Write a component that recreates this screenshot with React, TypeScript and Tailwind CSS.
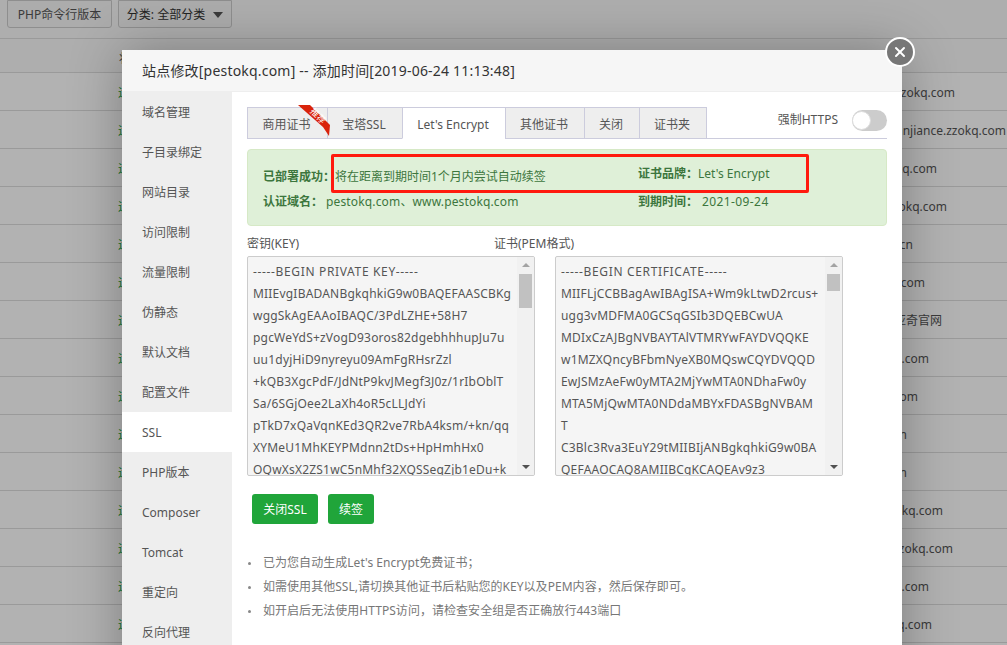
import { X } from "lucide-react";

const sansFont = "font-['Noto_Sans','Noto_Sans_CJK_SC',sans-serif]";

const pageRows = [
  { site: "www.zzokq.com", end: 955 },
  { site: "jianjiance.zzokq.com", end: 1006 },
  { site: "www.zzokq.com", end: 937 },
  { site: "www.zzokq.com", end: 947 },
  { site: "www.zzokq.cn", end: 913 },
  { site: "www.zzokq.com", end: 925 },
  { site: "亚奇官网", end: 942 },
  { site: "www.zzokq.com", end: 929 },
  { site: "www.zzokq.com", end: 918 },
  { site: "www.zzokq.cn", end: 907 },
  { site: "www.zzokq.cn", end: 907 },
  { site: "www.zzokq.com", end: 943 },
  { site: "www.zzokq.com", end: 953 },
  { site: "www.zzokq.com", end: 929 },
  { site: "www.zzokq.com", end: 932 },
];

const menuItems = ["域名管理", "子目录绑定", "网站目录", "访问限制", "流量限制", "伪静态", "默认文档", "配置文件", "SSL", "PHP版本", "Composer", "Tomcat", "重定向", "反向代理"];

const tabs = [
  { label: "商用证书", width: "w-[81px]" },
  { label: "宝塔SSL", width: "w-[76px]" },
  { label: "Let's Encrypt", width: "w-[104px]", active: true },
  { label: "其他证书", width: "w-[80px]" },
  { label: "关闭", width: "w-[56px]" },
  { label: "证书夹", width: "w-[68px]" },
];

const keyLines = [
  "-----BEGIN PRIVATE KEY-----",
  "MIIEvgIBADANBgkqhkiG9w0BAQEFAASCBKg",
  "wggSkAgEAAoIBAQC/3PdLZHE+58H7",
  "pgcWeYdS+zVogD93oros82dgebhhhupJu7u",
  "uu1dyjHiD9nyreyu09AmFgRHsrZzl",
  "+kQB3XgcPdF/JdNtP9kvJMegf3J0z/1rIbOblT",
  "Sa/6SGjOee2LaXh4oR5cLLJdYi",
  "pTkD7xQaVqnKEd3QR2ve7RbA4ksm/+kn/qq",
  "XYMeU1MhKEYPMdnn2tDs+HpHmhHx0",
  "OQwXsX2ZS1wC5nMhf32XQSSeqZjb1eDu+k",
];

const certLines = [
  "-----BEGIN CERTIFICATE-----",
  "MIIFLjCCBBagAwIBAgISA+Wm9kLtwD2rcus+",
  "ugg3vMDFMA0GCSqGSIb3DQEBCwUA",
  "MDIxCzAJBgNVBAYTAlVTMRYwFAYDVQQKE",
  "w1MZXQncyBFbmNyeXB0MQswCQYDVQQD",
  "EwJSMzAeFw0yMTA2MjYwMTA0NDhaFw0y",
  "MTA5MjQwMTA0NDdaMBYxFDASBgNVBAM",
  "T",
  "C3Blc3Rva3EuY29tMIIBIjANBgkqhkiG9w0BA",
  "QEFAAOCAQ8AMIIBCgKCAQEAv9z3",
];

const tips = [
  "已为您自动生成Let's Encrypt免费证书；",
  "如需使用其他SSL,请切换其他证书后粘贴您的KEY以及PEM内容，然后保存即可。",
  "如开启后无法使用HTTPS访问，请检查安全组是否正确放行443端口",
];

const CodeBox = ({ lines, thumb }: { lines: string[]; thumb: string }) => (
  <div className="flex h-[220px] w-[288px] overflow-hidden rounded-[2px] border border-[#ccc] bg-[#f5f5f5]">
    <div className="min-w-0 flex-1 overflow-hidden pl-[5px] pt-[4px] text-[12px] leading-[22px] text-[#555]">
      {lines.map((line) => (
        <div key={line} className={`whitespace-nowrap ${line.startsWith("-----") ? "tracking-[0.65px]" : "tracking-[0.2px]"}`}>
          {line}
        </div>
      ))}
    </div>
    <div className="flex w-[17px] flex-col items-center bg-[#f1f1f1]">
      <div className="mt-[6px] h-0 w-0 border-x-[4px] border-b-[4px] border-x-transparent border-b-[#a3a3a3]" />
      <div className={`mt-[7px] w-[13px] bg-[#c1c1c1] ${thumb}`} />
      <div className="mb-[6px] mt-auto h-0 w-0 border-x-[4px] border-t-[4px] border-x-transparent border-t-[#505050]" />
    </div>
  </div>
);

const App = () => {
  return (
    <div className={`relative h-[645px] w-[1007px] overflow-hidden bg-white text-[12px] text-[#555] ${sansFont}`}>
      <div className="flex h-[39px] items-start gap-[6px] border-b border-[#ddd] bg-[#fafafa] pl-[7px]">
        <button className="h-[28px] w-[105px] rounded-b-[3px] border border-[#ccc] bg-[#f6f6f6] pt-[2px] text-[12px] text-[#555]">PHP命令行版本</button>
        <button className="flex h-[28px] w-[114px] items-center justify-center gap-[8px] rounded-b-[3px] border border-[#ccc] bg-[#f6f6f6] pt-[2px] text-[12px] text-[#333]">
          分类: 全部分类
          <span className="h-0 w-0 border-x-[5.5px] border-t-[6px] border-x-transparent border-t-[#555]" />
        </button>
      </div>
      <div className="flex h-[34px] items-center border-b border-[#ddd] bg-[#fafafa] pl-[119px] pt-[6px] text-[12px]">状态</div>
      {pageRows.map((row, index) => (
        <div key={index} className="relative flex h-[38px] items-center justify-between border-b border-[#ddd] pt-[3px]">
          <span className="ml-[118px] text-[12px] text-[#20a53a]">运行中</span>
          <span className="absolute left-0 whitespace-nowrap text-right" style={{ width: row.end }}>
            {row.site}
          </span>
        </div>
      ))}

      <div className="absolute inset-0 bg-black/30" />

      <div className="absolute left-[122px] top-[50px] flex h-[700px] w-[780px] flex-col bg-white shadow-[1px_1px_50px_rgba(0,0,0,0.3)]">
        <div className="flex h-[42px] shrink-0 items-center border-b border-[#eee] bg-[#f6f6f6] pl-[20px] text-[14px] tracking-[0.2px] text-[#333]">
          站点修改[pestokq.com] -- 添加时间[2019-06-24 11:13:48]
        </div>
        <div className="flex min-h-0 flex-1">
          <div className="w-[110px] shrink-0 bg-[#eee] text-[12px] text-[#555]">
            {menuItems.map((item) => (
              <div key={item} className={`flex h-[40px] items-center pl-[20px] pt-[2px] ${item === "SSL" ? "bg-white" : ""}`}>
                {item}
              </div>
            ))}
          </div>

          <div className="relative flex-1 px-[15px] pt-[15px] text-[12px]">
            <div className="relative flex h-[32px] border-b border-[#ccd]">
              {tabs.map((tab) => (
                <div
                  key={tab.label}
                  className={`-mr-px flex h-[32px] items-center justify-center border border-[#ccd] pr-[2px] pt-[4px] ${tab.width} ${tab.active ? "border-b-white bg-white" : "bg-[#eee]"}`}
                >
                  {tab.label}
                </div>
              ))}
              <svg className="absolute left-[51px] top-[-2px] overflow-visible" width="33" height="33" viewBox="0 0 33 33">
                <polygon points="0,0 12,0 32,20 31,31 25,22" fill="#d9230b" />
                <text x="20" y="14" transform="rotate(45 20 11)" textAnchor="middle" fontSize="9" fill="#fff">推荐</text>
              </svg>
              <div className="ml-auto flex items-center self-start">
                <span className="mr-[14px] mt-[1px] leading-[24px]">强制HTTPS</span>
                <div className="mt-[1px] flex h-[21px] w-[35px] items-center rounded-full bg-[#ccc]">
                  <div className="h-[19px] w-[19px] rounded-full border border-[#ddd] bg-white" />
                </div>
              </div>
            </div>

            <div className="mt-[10px] grid h-[77px] grid-cols-[375px_1fr] content-start rounded-[4px] border border-[#d6e9c6] bg-[#dff0d8] pl-[15px] pt-[14px] leading-[25px] text-[#3c763d]">
              <div><b className="inline-block w-[72px]">已部署成功：</b>将在距离到期时间1个月内尝试自动续签</div>
              <div className="-translate-y-[3px]"><b className="inline-block w-[60px]">证书品牌：</b>Let's Encrypt</div>
              <div><b className="inline-block w-[63px]">认证域名：</b><span className="tracking-[0.15px]">pestokq.com、www.pestokq.com</span></div>
              <div><b className="inline-block w-[64px]">到期时间：</b><span className="tracking-[0.4px]">2021-09-24</span></div>
            </div>

            <div className="mt-[6px] flex h-[24px] items-center">
              <span className="w-[247px]">密钥(KEY)</span>
              <span>证书(PEM格式)</span>
            </div>
            <div className="flex gap-[20px]">
              <CodeBox lines={keyLines} thumb="h-[34px]" />
              <CodeBox lines={certLines} thumb="h-[17px]" />
            </div>

            <div className="ml-[5px] mt-[18px] flex gap-[10px] text-white">
              <button className="h-[30px] w-[66px] rounded-[3px] bg-[#20a53a] pt-[1px]">关闭SSL</button>
              <button className="h-[30px] w-[46px] rounded-[3px] bg-[#20a53a] pt-[1px]">续签</button>
            </div>

            <ul className="mt-[27px] list-none tracking-[0.04px] text-[#777]">
              {tips.map((tip) => (
                <li key={tip} className="flex h-[24px] items-center">
                  <span className="ml-[1px] mr-[12px] h-[3px] w-[3px] rounded-full bg-[#888]" />
                  {tip}
                </li>
              ))}
            </ul>

            <div className="absolute left-[99px] top-[62px] h-[39px] w-[478px] rounded-[2px] border-[3px] border-[#ff1a0e]" />
          </div>
        </div>

        <button className="absolute right-[-13px] top-[-13px] flex h-[30px] w-[30px] items-center justify-center rounded-full border-[2.5px] border-white bg-[#777] text-white">
          <X size={16} strokeWidth={3} />
        </button>
      </div>
    </div>
  );
};

export default App;
